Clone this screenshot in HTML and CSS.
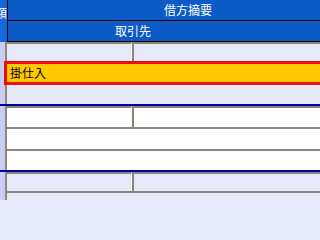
FILE: index.html
```html
<!DOCTYPE html>
<html lang="ja">
<head>
<meta charset="utf-8">
<link rel="stylesheet" href="styles.css">
</head>
<body>
<div class="grid">
  <div class="head">
    <div class="head-stub"><span>額</span></div>
    <div class="head-main">
      <div class="hrow"><div class="hcell w360">借方摘要</div></div>
      <div class="hrow"><div class="hcell w250">取引先</div></div>
    </div>
  </div>

  <div class="row lav h19"><div class="gut"></div><div class="cell top c1"></div><div class="cell top c2"></div></div>
  <div class="row selrow"><div class="gut-sel"></div><div class="sel">掛仕入</div></div>
  <div class="row lav h19"><div class="gut"></div><div class="cell c2"></div></div>
  <div class="sep"></div>
  <div class="row white h21"><div class="gut"></div><div class="cell top c1"></div><div class="cell top c2"></div></div>
  <div class="row white h22"><div class="gut"></div><div class="cell top c2"></div></div>
  <div class="row white h21"><div class="gut"></div><div class="cell top c2"></div></div>
  <div class="sep"></div>
  <div class="row lav h19"><div class="gut"></div><div class="cell top c1"></div><div class="cell top c2"></div></div>
  <div class="row lav h9"><div class="gut"></div><div class="cell top c2"></div></div>
</div>
</body>
</html>
```

FILE: styles.css
```css
html, body {
  margin: 0;
  padding: 0;
  overflow: hidden;
  background: #e6eaf8;
}
.grid {
  min-width: 250px;
  font-family: "Noto Sans CJK JP", sans-serif;
  font-size: 12px;
}
.head {
  display: flex;
  height: 42px;
  background: #0d5bc6;
}
.head-stub {
  width: 7px;
  flex-shrink: 0;
  background: #1767dc;
  border-right: 1px solid #000;
  display: flex;
  justify-content: flex-end;
  overflow: hidden;
  color: #fff;
  line-height: 20px;
  padding-top: 3px;
  height: 39px;
}
.head-stub span {
  flex-shrink: 0;
}
.head-main {
  flex: 1;
  display: flex;
  flex-direction: column;
  overflow: hidden;
}
.hrow {
  height: 20px;
  border-bottom: 1px solid #000;
  display: flex;
}
.hcell {
  flex-shrink: 0;
  text-align: center;
  color: #fff;
  line-height: 20px;
}
.w360 { width: 360px; }
.w250 { width: 250px; }

.row {
  display: flex;
  box-sizing: border-box;
}
.h9 { height: 9px; }
.h19 { height: 19px; }
.h21 { height: 21px; }
.h22 { height: 22px; }
.lav .cell { background: #e6eaf8; }
.white .cell { background: #ffffff; }
.gut {
  width: 5px;
  flex-shrink: 0;
  background: #c9cdf4;
  border-right: 2px solid #8a8679;
}
.cell {
  box-sizing: border-box;
}
.cell.top {
  border-top: 2px solid #8a8679;
}
.c1 {
  width: 125px;
  flex-shrink: 0;
  border-right: 1px solid #fafaf4;
}
.c1 + .c2 {
  border-left: 2px solid #8a8679;
}
.c2 {
  flex: 1;
}
.selrow {
  height: 24px;
  background: #c9cdf4;
}
.gut-sel {
  width: 4px;
  flex-shrink: 0;
  background: #c9cdf4;
}
.sel {
  flex: 1;
  box-sizing: border-box;
  border: 3px solid #f20d0d;
  border-right: none;
  background: #ffc800;
  color: #000;
  padding-left: 3px;
  line-height: 18px;
}
.sep {
  height: 2px;
  background: #0000a0;
}
```
